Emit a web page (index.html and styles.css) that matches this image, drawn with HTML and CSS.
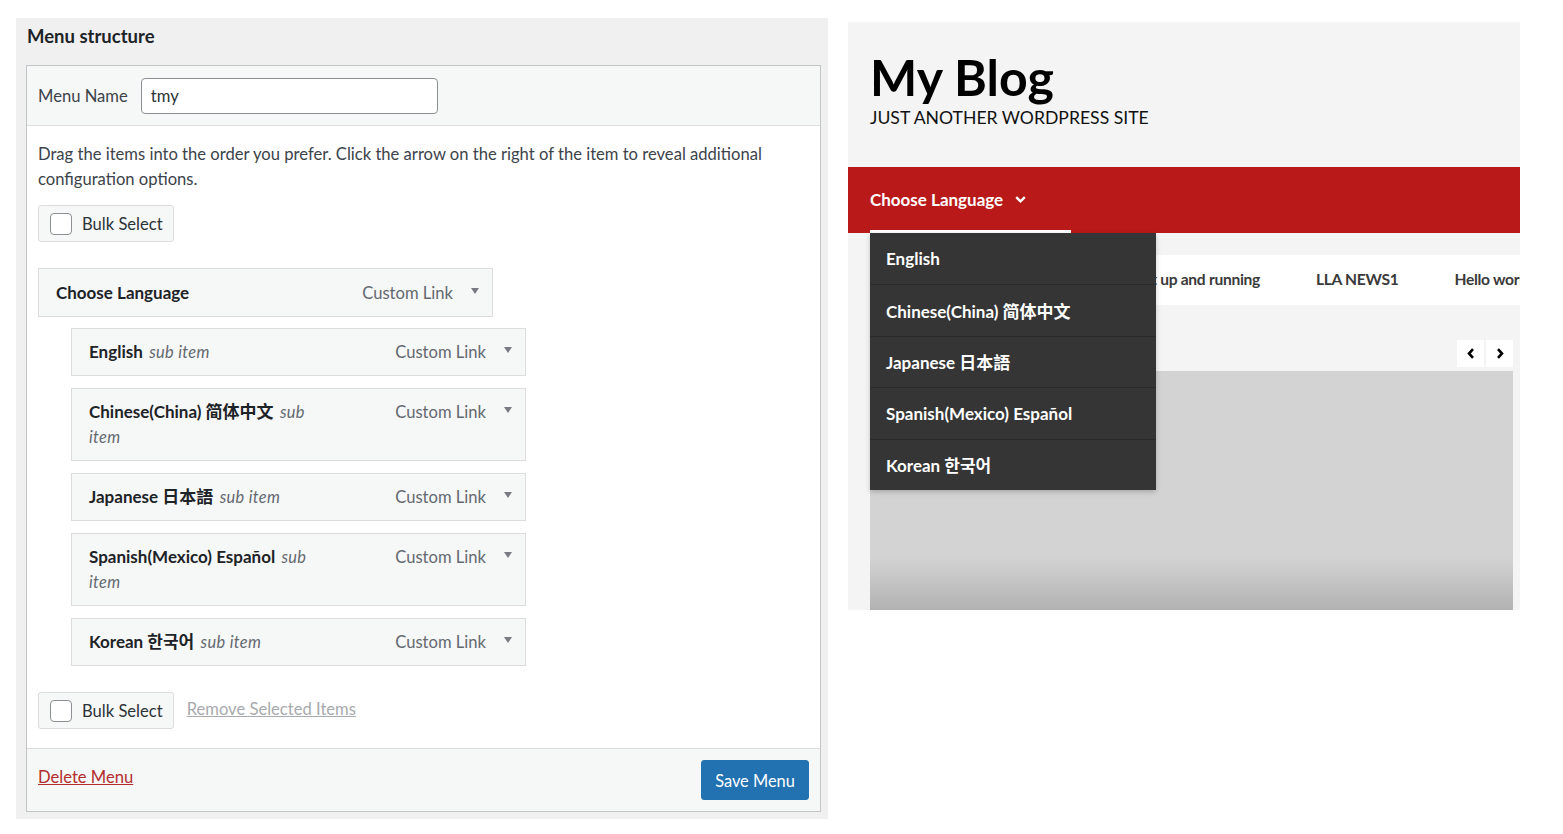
FILE: index.html
```html
<!DOCTYPE html>
<html lang="en">
<head>
<meta charset="utf-8">
<title>Menu structure</title>
<link rel="stylesheet" href="styles.css">
</head>
<body>
<div class="page">
  <section class="admin">
    <h2 class="admin-title">Menu structure</h2>
    <div class="menu-box">
      <div class="menu-head">
        <label class="name-label">Menu Name</label>
        <input class="name-input" type="text" value="tmy">
      </div>
      <div class="menu-body">
        <p class="hint">Drag the items into the order you prefer. Click the arrow on the right of the item to reveal additional configuration options.</p>
        <div class="bulk bulk-top"><span class="check"></span><span>Bulk Select</span></div>
        <ul class="items">
          <li class="item main">
            <div class="item-title"><b>Choose Language</b></div>
            <span class="item-type">Custom Link</span>
            <svg class="arrow" width="8" height="6" viewBox="0 0 8 6"><path d="M0 0H8L4 6Z" fill="#787c82"/></svg>
          </li>
          <li class="item sub">
            <div class="item-title"><b>English</b> <span class="item-sub">sub</span> <span class="item-sub">item</span></div>
            <span class="item-type">Custom Link</span>
            <svg class="arrow" width="8" height="6" viewBox="0 0 8 6"><path d="M0 0H8L4 6Z" fill="#787c82"/></svg>
          </li>
          <li class="item sub">
            <div class="item-title"><b>Chinese(China) 简体中文</b> <span class="item-sub">sub</span> <span class="item-sub">item</span></div>
            <span class="item-type">Custom Link</span>
            <svg class="arrow" width="8" height="6" viewBox="0 0 8 6"><path d="M0 0H8L4 6Z" fill="#787c82"/></svg>
          </li>
          <li class="item sub">
            <div class="item-title"><b>Japanese 日本語</b> <span class="item-sub">sub</span> <span class="item-sub">item</span></div>
            <span class="item-type">Custom Link</span>
            <svg class="arrow" width="8" height="6" viewBox="0 0 8 6"><path d="M0 0H8L4 6Z" fill="#787c82"/></svg>
          </li>
          <li class="item sub">
            <div class="item-title"><b>Spanish(Mexico) Español</b> <span class="item-sub">sub</span> <span class="item-sub">item</span></div>
            <span class="item-type">Custom Link</span>
            <svg class="arrow" width="8" height="6" viewBox="0 0 8 6"><path d="M0 0H8L4 6Z" fill="#787c82"/></svg>
          </li>
          <li class="item sub">
            <div class="item-title"><b>Korean 한국어</b> <span class="item-sub">sub</span> <span class="item-sub">item</span></div>
            <span class="item-type">Custom Link</span>
            <svg class="arrow" width="8" height="6" viewBox="0 0 8 6"><path d="M0 0H8L4 6Z" fill="#787c82"/></svg>
          </li>
        </ul>
        <div class="bulk-row">
          <div class="bulk"><span class="check"></span><span>Bulk Select</span></div>
          <a class="remove" href="#">Remove Selected Items</a>
        </div>
      </div>
      <div class="menu-foot">
        <a class="delete" href="#">Delete Menu</a>
        <button class="save" type="button">Save Menu</button>
      </div>
    </div>
  </section>

  <section class="site">
    <header class="site-header">
      <h1 class="site-title">My Blog</h1>
      <p class="site-tagline">Just another WordPress site</p>
    </header>
    <nav class="navbar">
      <div class="nav-item">
        <span>Choose Language</span>
        <svg width="11" height="7" viewBox="0 0 11 7"><path d="M1.2 1.2L5.5 5.3L9.8 1.2" fill="none" stroke="#fff" stroke-width="2.4"/></svg>
        <ul class="dropdown">
          <li>English</li>
          <li>Chinese(China) 简体中文</li>
          <li>Japanese 日本語</li>
          <li>Spanish(Mexico) Español</li>
          <li>Korean 한국어</li>
        </ul>
      </div>
    </nav>
    <div class="subnav">
      <span class="subnav-item subnav-first">Get up and running</span>
      <span class="subnav-item">LLA NEWS1</span>
      <span class="subnav-item">Hello world!</span>
    </div>
    <div class="slider">
      <div class="slider-controls">
        <span class="ctrl"><svg width="8" height="11" viewBox="0 0 8 11"><path d="M6 1.2L2 5.5L6 9.8" fill="none" stroke="#000" stroke-width="2.6"/></svg></span>
        <span class="ctrl"><svg width="8" height="11" viewBox="0 0 8 11"><path d="M2 1.2L6 5.5L2 9.8" fill="none" stroke="#000" stroke-width="2.6"/></svg></span>
      </div>
      <div class="slide"></div>
    </div>
  </section>
</div>
</body>
</html>
```

FILE: styles.css
```css
body {
  margin: 0;
  background: #fff;
  font-family: Lato, "Noto Sans CJK SC", sans-serif;
}

.page {
  display: flex;
  align-items: flex-start;
  padding: 18px 0 0 16px;
}

/* ---------- Admin panel ---------- */
.admin {
  width: 812px;
  box-sizing: border-box;
  background: #f0f0f1;
  padding: 0 7px 7px 10px;
  font-size: 16.6px;
}

.admin-title {
  margin: 0;
  font-size: 18.5px;
  font-weight: 700;
  color: #1d2327;
  line-height: 24px;
  padding: 6px 0 17px 1px;
}

.menu-box {
  border: 1px solid #c3c4c7;
  background: #fff;
}

.menu-head {
  height: 59px;
  background: #f6f7f7;
  border-bottom: 1px solid #dcdcde;
  display: flex;
  align-items: center;
  padding: 0 11px;
}

.name-label {
  color: #3c434a;
  margin-right: 13px;
}

.name-input {
  width: 297px;
  height: 36px;
  box-sizing: border-box;
  border: 1px solid #8c8f94;
  border-radius: 4px;
  padding: 0 9px;
  font: 16.6px Lato, sans-serif;
  color: #2c3338;
  background: #fff;
}

.menu-body {
  padding: 16px 11px 19px;
}

.hint {
  margin: 0;
  line-height: 25px;
  color: #3c434a;
}

.bulk {
  display: inline-flex;
  align-items: center;
  height: 37px;
  box-sizing: border-box;
  border: 1px solid #dcdcde;
  background: #f6f7f7;
  border-radius: 3px;
  padding: 0 10px 0 11px;
  gap: 10px;
  color: #2c3338;
  white-space: nowrap;
}

.bulk-top {
  margin-top: 13px;
}

.check {
  width: 22px;
  height: 22px;
  box-sizing: border-box;
  border: 1px solid #8c8f94;
  border-radius: 4px;
  background: #fff;
  flex: none;
}

.items {
  list-style: none;
  margin: 26px 0 0;
  padding: 0;
  display: flex;
  flex-direction: column;
  gap: 12px;
}

.item {
  width: 455px;
  box-sizing: border-box;
  display: flex;
  align-items: flex-start;
  padding: 10px 13px 11px 17px;
  border: 1px solid #dcdcde;
  background: #f6f7f7;
  line-height: 25px;
}

.item.main {
  padding-top: 11px;
  margin-bottom: -1px;
}

.item.sub {
  margin-left: 33px;
}

.item-title {
  width: 235px;
  font-size: 17px;
  color: #1d2327;
}

.item-title b {
  font-weight: 700;
}

.item-sub {
  font-style: italic;
  color: #646970;
  font-size: 16.4px;
  line-height: 1;
  letter-spacing: 0.3px;
}

.item-title b + .item-sub {
  margin-left: 2px;
}

.item-type {
  margin-left: auto;
  padding-top: 2px;
  line-height: 23px;
  color: #646970;
}

.arrow {
  flex: none;
  margin-left: 18px;
  margin-top: 8px;
}

.bulk-row {
  display: flex;
  align-items: center;
  gap: 13px;
  margin-top: 26px;
}

.remove {
  color: #a7aaad;
  text-decoration: underline;
  margin-bottom: 3px;
}

.menu-foot {
  border-top: 1px solid #dcdcde;
  background: #f6f7f7;
  display: flex;
  justify-content: space-between;
  align-items: center;
  padding: 11px;
}

.delete {
  color: #b32d2e;
  text-decoration: underline;
  margin-bottom: 6px;
}

.save {
  height: 40px;
  width: 108px;
  background: #2271b1;
  border: 1px solid #2271b1;
  border-radius: 3px;
  color: #fff;
  font: 16.4px Lato, sans-serif;
  padding: 0;
}

/* ---------- Site preview ---------- */
.site {
  margin: 4px 0 0 20px;
  width: 672px;
  height: 588px;
  background: #f4f4f4;
  overflow: hidden;
}

.site-header {
  height: 145px;
  box-sizing: border-box;
  padding: 24px 0 0 22px;
}

.site-title {
  margin: 0;
  font-size: 50px;
  line-height: 62px;
  font-weight: 700;
  color: #000;
}

.site-tagline {
  margin: 0;
  font-size: 17.6px;
  line-height: 20px;
  text-transform: uppercase;
  color: #111;
}

.navbar {
  height: 66px;
  background: #b91919;
  padding-left: 22px;
  display: flex;
}

.nav-item {
  position: relative;
  width: 201px;
  height: 66px;
  box-sizing: border-box;
  padding-top: 2px;
  display: flex;
  align-items: center;
  gap: 12px;
  color: #fff;
  font-weight: 700;
  font-size: 17px;
  border-bottom: 3px solid #fff;
}

.dropdown {
  position: absolute;
  left: 0;
  top: 66px;
  width: 286px;
  margin: 0;
  padding: 0;
  list-style: none;
  background: #353535;
  box-shadow: 0 2px 5px rgba(0, 0, 0, 0.2);
  z-index: 2;
}

.dropdown li {
  height: 51.4px;
  box-sizing: border-box;
  display: flex;
  align-items: center;
  padding-left: 16px;
  border-top: 1px solid #2b2b2b;
  color: #fff;
  font-size: 17px;
  font-weight: 700;
}

.dropdown li:first-child {
  border-top: none;
}

.subnav {
  margin: 22px 0 0 22px;
  height: 50px;
  box-sizing: border-box;
  padding-bottom: 3px;
  background: #fff;
  display: flex;
  align-items: center;
  gap: 56px;
  white-space: nowrap;
  overflow: hidden;
}

.subnav-item {
  flex: none;
  font-size: 15.6px;
  letter-spacing: -0.3px;
  font-weight: 700;
  color: #3a3a3a;
}

.subnav-first {
  width: 390px;
  text-align: right;
}

.slider {
  margin: 35px 7px 0 22px;
}

.slider-controls {
  display: flex;
  justify-content: flex-end;
  gap: 2px;
}

.ctrl {
  width: 27px;
  height: 27px;
  background: #fff;
  display: flex;
  align-items: center;
  justify-content: center;
}

.slide {
  margin-top: 4px;
  height: 239px;
  background: linear-gradient(#d3d3d3 0, #d3d3d3 78%, #b2b2b2 100%);
}
```
